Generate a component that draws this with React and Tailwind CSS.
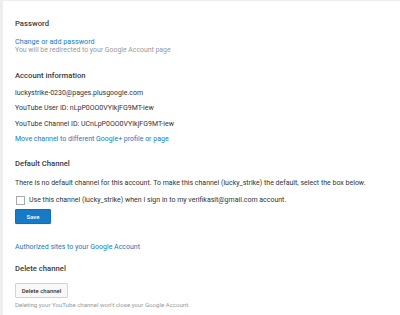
import React, { useState } from "react";

const font = { fontFamily: "Roboto, 'Liberation Sans', sans-serif" };

const Heading = ({ children, className = "" }) => (
  <div className={`text-[7.7px] leading-[12px] font-medium text-[#3a3a3a] ${className}`}>
    {children}
  </div>
);

const Line = ({ children, className = "" }) => (
  <div className={`text-[7px] leading-[10px] text-[#333] whitespace-nowrap ${className}`}>
    {children}
  </div>
);

const A = ({ children, className = "text-[7px] leading-[10px]" }) => (
  <a href="#" className={`block text-[#167ac6] whitespace-nowrap ${className}`}>
    {children}
  </a>
);

export default function App() {
  const [checked, setChecked] = useState(false);

  return (
    <div style={font} className="w-[400px] h-[315px] overflow-hidden bg-white flex">
      {/* left gutter */}
      <div className="w-[3px] bg-[#eee] shrink-0" />
      <div className="flex-1 border-t border-[#eee] pl-[12px] pt-[17px]">
        {/* Password */}
        <Heading>Password</Heading>
        <A className="mt-[8px] text-[7.2px] leading-[8px]">Change or add password</A>
        <div className="text-[6.9px] leading-[6px] mt-[1px] text-[#999] whitespace-nowrap">
          You will be redirected to your Google Account page
        </div>

        {/* Account information */}
        <Heading className="mt-[17px]">Account information</Heading>
        <Line className="mt-[6px]">luckystrike-0230@pages.plusgoogle.com</Line>
        <Line className="mt-[5px]">YouTube User ID: nLpP0OO0VYIkjFG9MT-iew</Line>
        <Line className="mt-[6px]">YouTube Channel ID: UCnLpP0OO0VYIkjFG9MT-iew</Line>
        <A className="mt-[5px] text-[7px] leading-[10px]">
          Move channel to different Google+ profile or page
        </A>

        {/* Default channel */}
        <Heading className="mt-[14px]">Default Channel</Heading>
        <Line className="mt-[8px]">
          There is no default channel for this account. To make this channel (lucky_strike) the default, select the box below.
        </Line>
        <label className="mt-[6px] flex items-center h-[12px] cursor-pointer">
          <span
            onClick={() => setChecked(!checked)}
            className="w-[9px] h-[9px] ml-[1px] border border-[#aaa] bg-white shrink-0"
          />
          <span className="ml-[4px] text-[7px] text-[#333] whitespace-nowrap">
            Use this channel (lucky_strike) when I sign in to my verifikasit@gmail.com account.
          </span>
        </label>
        <button className="mt-[3px] w-[36px] h-[15px] bg-[#167ac6] border border-[#126db3] rounded-[1px] text-white text-[6px] font-medium flex items-center justify-center shadow-[0_1px_0_rgba(0,0,0,0.05)]">
          Save
        </button>

        <A className="mt-[18px] text-[7px] leading-[10px]">
          Authorized sites to your Google Account
        </A>

        {/* Delete channel */}
        <Heading className="mt-[11px]">Delete channel</Heading>
        <button className="mt-[8px] w-[53px] h-[15px] bg-[#f8f8f8] border border-[#d3d3d3] rounded-[1px] text-[#333] text-[6px] font-medium flex items-center justify-center">
          Delete channel
        </button>
        <div className="mt-[3px] text-[6.1px] leading-[7px] text-[#999] whitespace-nowrap">
          Deleting your YouTube channel won't close your Google Account.
        </div>
      </div>
    </div>
  );
}
